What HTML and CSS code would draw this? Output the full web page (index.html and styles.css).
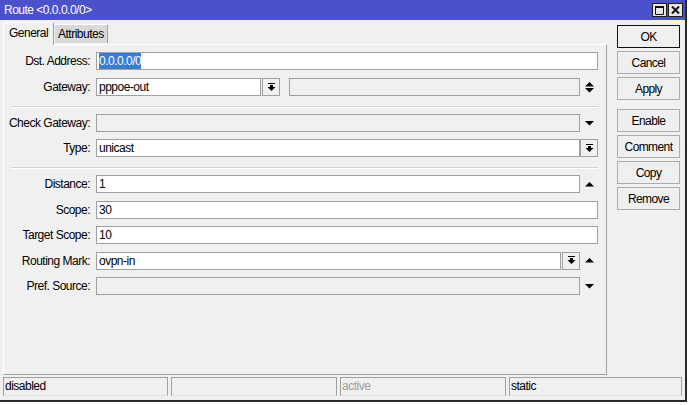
FILE: index.html
```html
<!DOCTYPE html>
<html>
<head>
<meta charset="utf-8">
<link rel="stylesheet" href="styles.css">
</head>
<body>
<div class="window">
  <div class="titlebar">
    <span class="title">Route &lt;0.0.0.0/0&gt;</span>
    <div class="tb-btns">
      <span class="tb-btn"><svg width="9" height="9" viewBox="0 0 9 9"><path d="M0.5 1.5h8v7h-8z" fill="none" stroke="#111" stroke-width="1"/><rect x="0" y="0" width="9" height="2" fill="#111"/></svg></span>
      <span class="tb-btn"><svg width="9" height="8" viewBox="0 0 9 8"><path d="M1 0.5L8 7.5M8 0.5L1 7.5" stroke="#111" stroke-width="2"/></svg></span>
    </div>
  </div>
  <div class="content">
    <div class="main">
      <div class="tabs">
        <div class="tab active">General</div>
        <div class="tab inactive">Attributes</div>
      </div>
      <div class="panel">
        <div class="group g1">
          <div class="row">
            <span class="lbl">Dst. Address:</span>
            <div class="field w-full"><span class="sel">0.0.0.0/0</span></div>
          </div>
          <div class="row">
            <span class="lbl">Gateway:</span>
            <div class="field w-gw">pppoe-out</div>
            <span class="btn-dd gw-btn"><svg width="9" height="9" viewBox="0 0 9 9"><path d="M1 0h7v1H1z M3 2h3v2h2.5L4.5 8 0.5 4H3z" fill="#000"/></svg></span>
            <div class="field dis w-gw2"></div>
            <span class="ind"><svg width="9" height="11" viewBox="0 0 9 11"><path d="M4.5 0L9 4.5H0z M0 6h9L4.5 10.5z" fill="#000"/></svg></span>
          </div>
        </div>
        <div class="sep"></div>
        <div class="group g2">
          <div class="row">
            <span class="lbl">Check Gateway:</span>
            <div class="field dis w-main"></div>
            <span class="ind"><svg width="9" height="5" viewBox="0 0 9 5"><path d="M0 0h9L4.5 4.5z" fill="#000"/></svg></span>
          </div>
          <div class="row">
            <span class="lbl">Type:</span>
            <div class="field w-main">unicast</div>
            <span class="btn-dd"><svg width="9" height="9" viewBox="0 0 9 9"><path d="M1 0h7v1H1z M3 2h3v2h2.5L4.5 8 0.5 4H3z" fill="#000"/></svg></span>
          </div>
        </div>
        <div class="sep"></div>
        <div class="group g3">
          <div class="row">
            <span class="lbl">Distance:</span>
            <div class="field w-main">1</div>
            <span class="ind"><svg width="9" height="5" viewBox="0 0 9 5"><path d="M4.5 0L9 4.5H0z" fill="#000"/></svg></span>
          </div>
          <div class="row">
            <span class="lbl">Scope:</span>
            <div class="field w-full">30</div>
          </div>
          <div class="row">
            <span class="lbl">Target Scope:</span>
            <div class="field w-full">10</div>
          </div>
          <div class="row">
            <span class="lbl">Routing Mark:</span>
            <div class="field w-rm">ovpn-in</div>
            <span class="btn-dd rm-btn"><svg width="9" height="9" viewBox="0 0 9 9"><path d="M1 0h7v1H1z M3 2h3v2h2.5L4.5 8 0.5 4H3z" fill="#000"/></svg></span>
            <span class="ind"><svg width="9" height="5" viewBox="0 0 9 5"><path d="M4.5 0L9 4.5H0z" fill="#000"/></svg></span>
          </div>
          <div class="row">
            <span class="lbl">Pref. Source:</span>
            <div class="field dis w-main"></div>
            <span class="ind"><svg width="9" height="5" viewBox="0 0 9 5"><path d="M0 0h9L4.5 4.5z" fill="#000"/></svg></span>
          </div>
        </div>
      </div>
    </div>
    <div class="side">
      <div class="btn ok">OK</div>
      <div class="btn">Cancel</div>
      <div class="btn sect">Apply</div>
      <div class="btn">Enable</div>
      <div class="btn">Comment</div>
      <div class="btn">Copy</div>
      <div class="btn">Remove</div>
    </div>
  </div>
  <div class="status">
    <div class="cell">disabled</div>
    <div class="cell"></div>
    <div class="cell muted">active</div>
    <div class="cell">static</div>
  </div>
</div>
</body>
</html>
```

FILE: styles.css
```css
* { box-sizing: border-box; }
html, body { margin: 0; padding: 0; }
body {
  background: #ffffff;
  width: 689px;
  height: 405px;
  overflow: hidden;
  font-family: "Liberation Sans", Arial, sans-serif;
  font-size: 12px;
  letter-spacing: -0.5px;
  color: #000;
}
.window {
  width: 687px;
  height: 402px;
  background: #f0f0f0;
  border-right: 2px solid #2a2a2a;
  border-bottom: 2px solid #2a2a2a;
  display: flex;
  flex-direction: column;
}
.titlebar {
  height: 20px;
  flex: none;
  background: #4b50cb;
  color: #fff;
  display: flex;
  align-items: center;
  justify-content: space-between;
  padding: 0 2px 0 4px;
}
.tb-btns {
  display: flex;
  gap: 1px;
  align-self: flex-start;
  margin-top: 3px;
}
.tb-btn {
  width: 15px;
  height: 14px;
  border: 1px solid #1e1e1e;
  background: #e6e6e6;
  display: flex;
  align-items: center;
  justify-content: center;
}
.content {
  height: 355px;
  flex: none;
  display: flex;
}
.main {
  margin-left: 3px;
  width: 604px;
  display: flex;
  flex-direction: column;
}
.tabs {
  height: 24px;
  flex: none;
  display: flex;
  align-items: flex-end;
}
.tab {
  display: flex;
  align-items: center;
  white-space: nowrap;
}
.tab.active {
  width: 51px;
  height: 23px;
  margin-bottom: -1px;
  position: relative;
  z-index: 1;
  background: #f0f0f0;
  border-top: 1px solid #fff;
  border-left: 1px solid #fff;
  border-right: 1px solid #a0a0a0;
  padding-left: 5px;
  padding-bottom: 2px;
}
.tab.inactive {
  width: 53px;
  height: 19px;
  margin-left: 1px;
  margin-bottom: 1px;
  background: #d9d9d9;
  border-top: 1px solid #fff;
  border-right: 1px solid #a0a0a0;
  padding-left: 3px;
}
.panel {
  height: 331px;
  border-top: 1px solid #fff;
  border-left: 1px solid #fff;
  border-right: 1px solid #a0a0a0;
  border-bottom: 1px solid #a0a0a0;
  padding-top: 7px;
}
.group { display: flex; flex-direction: column; }
.g1 { gap: 8px; }
.g2 { gap: 7px; }
.g3 { gap: 7.5px; }
.row {
  height: 18px;
  display: flex;
  align-items: center;
}
.lbl {
  width: 86px;
  margin-right: 6px;
  text-align: right;
  white-space: nowrap;
}
.field {
  height: 18px;
  border: 1px solid #a0a0a0;
  background: #fff;
  padding-left: 2px;
  display: flex;
  align-items: center;
  white-space: nowrap;
  overflow: hidden;
}
.field.dis { background: #f0f0f0; }
.w-full { width: 502px; }
.w-main { width: 484px; }
.w-gw { width: 165px; margin-right: 1px; }
.w-gw2 { width: 291px; }
.w-rm { width: 465px; margin-right: 1px; }
.gw-btn { margin-right: 9px; }
.sel {
  display: inline-block;
  height: 16px;
  line-height: 16px;
  background: #3a7bd5;
  color: #fff;
}
.btn-dd {
  width: 18px;
  height: 18px;
  border: 1px solid #a0a0a0;
  background: #f0f0f0;
  display: flex;
  align-items: center;
  justify-content: center;
}
.ind {
  width: 19px;
  display: flex;
  justify-content: center;
  align-items: center;
}
.sep {
  margin: 10px 0 6px 7px;
  width: 587px;
  height: 2px;
  border-top: 1px solid #d5d5d5;
  border-bottom: 1px solid #fff;
}
.side {
  width: 63px;
  margin-left: 10px;
  padding-top: 5px;
  display: flex;
  flex-direction: column;
}
.btn {
  height: 23px;
  margin-bottom: 3px;
  border: 1px solid #adadad;
  background: #efefef;
  display: flex;
  align-items: center;
  justify-content: center;
  letter-spacing: -0.6px;
}
.btn.ok { border-color: #111; }
.btn.sect { margin-bottom: 9px; }
.status {
  height: 25px;
  flex: none;
  display: grid;
  grid-template-columns: 165px 166px 166px 173px;
  column-gap: 3px;
  padding: 2px 0 0 3px;
}
.cell {
  height: 19px;
  border: 1px solid #a0a0a0;
  border-bottom-color: #e4e4e4;
  padding-left: 1px;
  line-height: 17px;
  white-space: nowrap;
}
.cell.muted { color: #a0a0a0; }
```
